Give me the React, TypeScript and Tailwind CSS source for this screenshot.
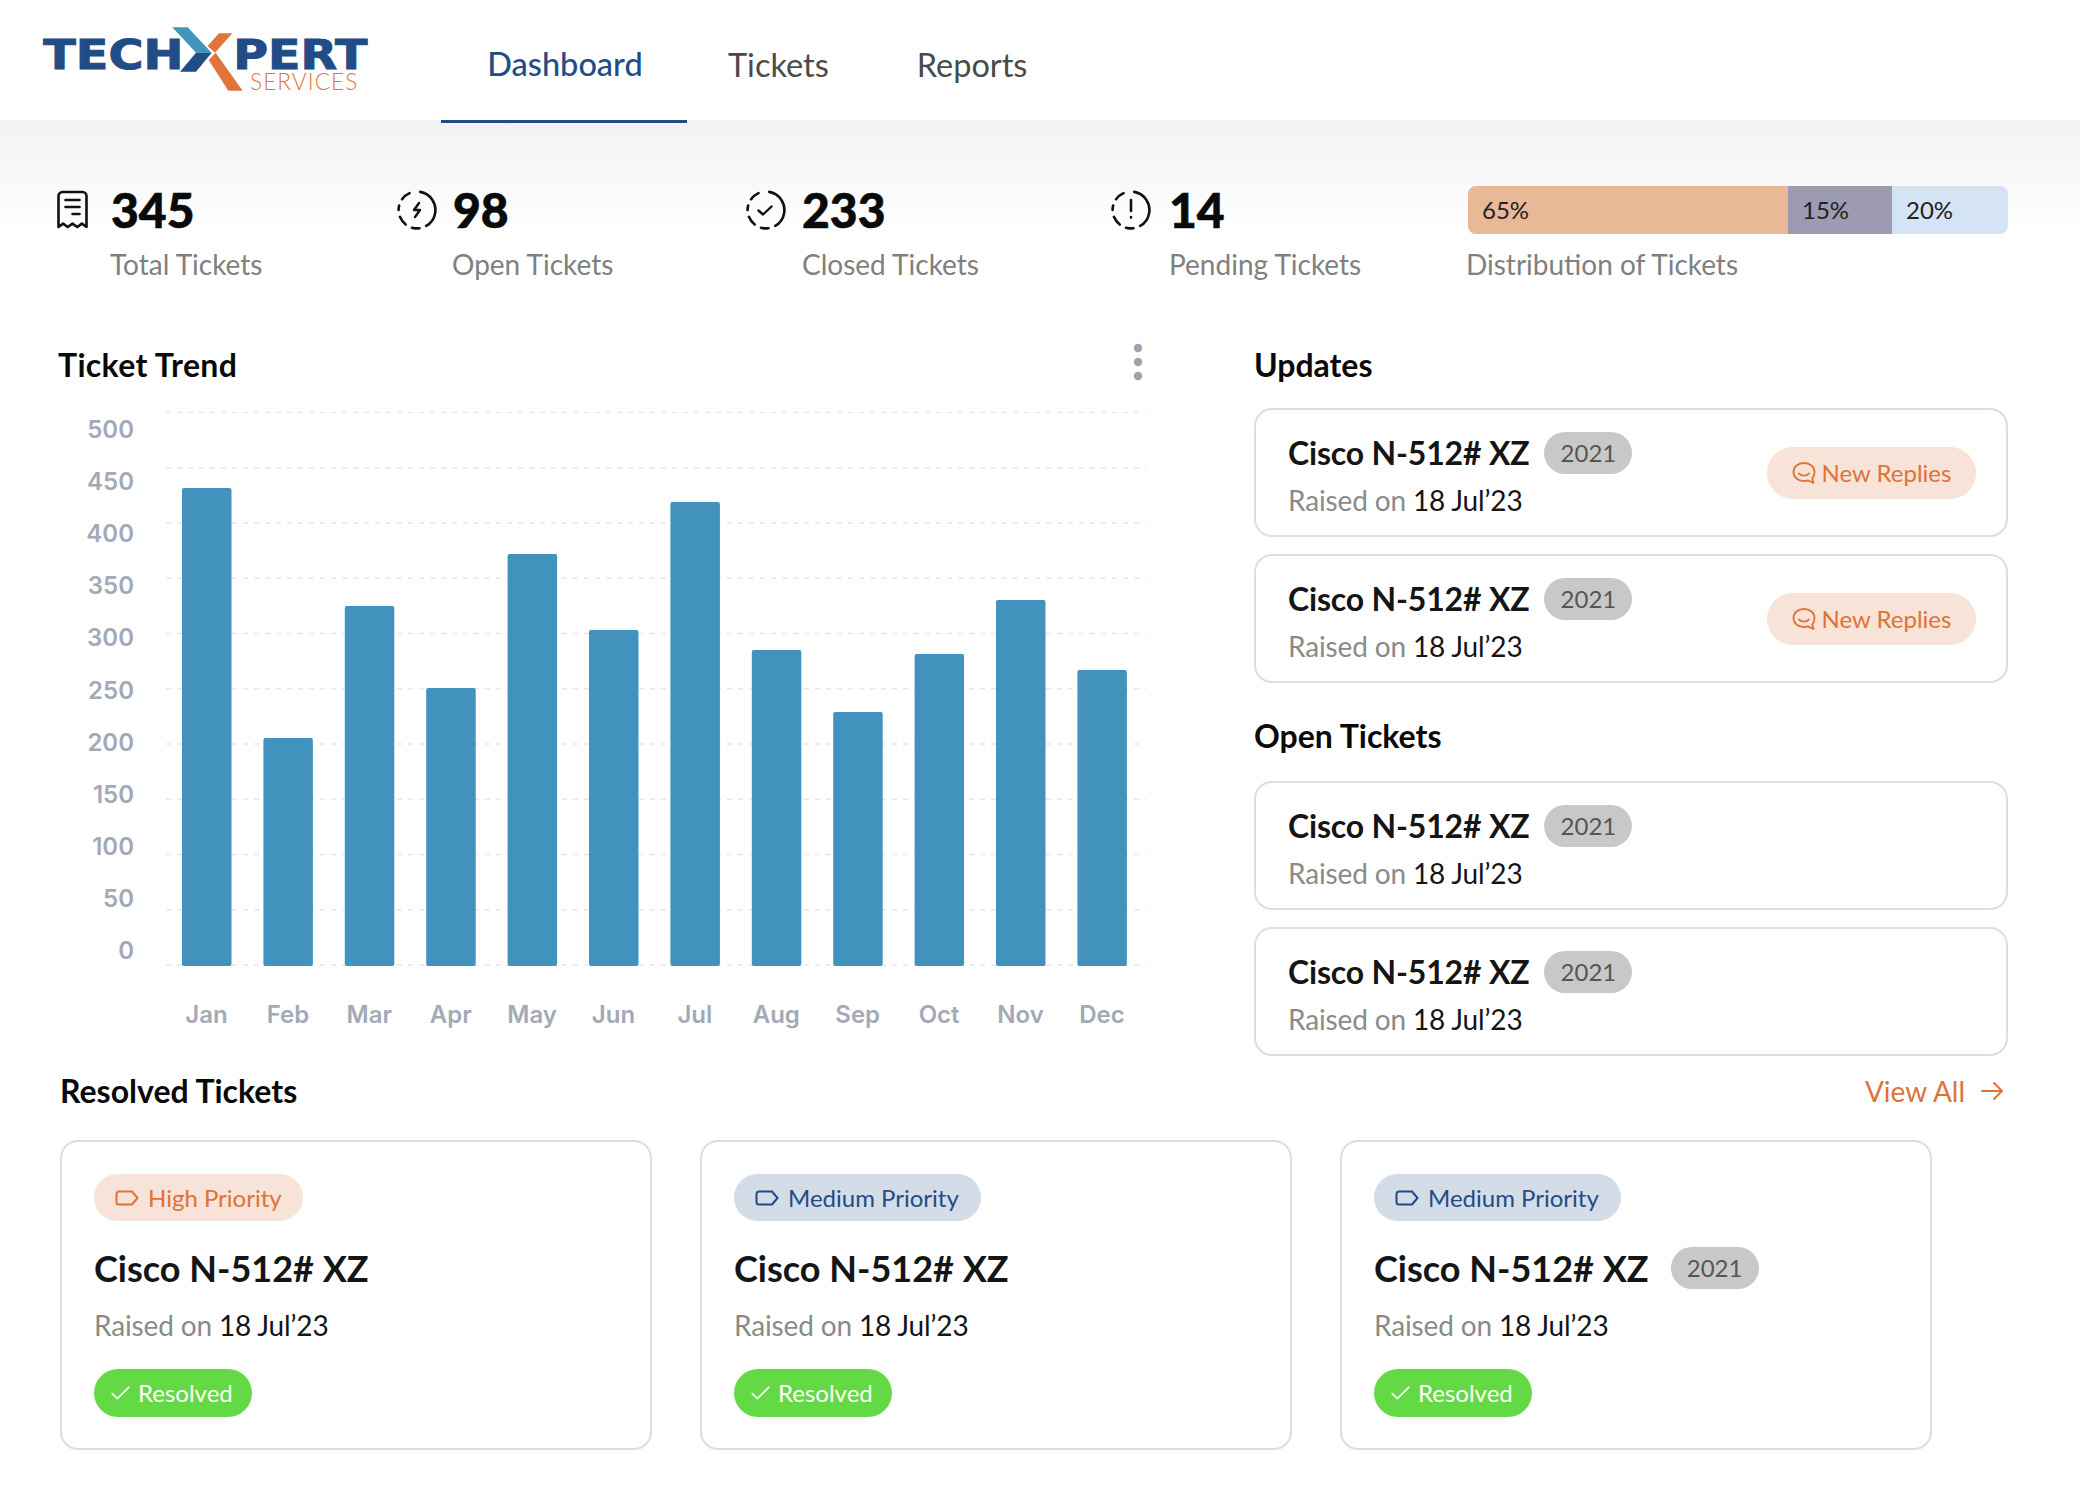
import { Check } from "lucide-react";

const months = ["Jan", "Feb", "Mar", "Apr", "May", "Jun", "Jul", "Aug", "Sep", "Oct", "Nov", "Dec"];
const barTops = [488, 738, 606, 688, 554, 630, 502, 650, 712, 654, 600, 670];
const yLabels = [500, 450, 400, 350, 300, 250, 200, 150, 100, 50, 0];

function Logo() {
  return (
    <svg width="360" height="100" viewBox="0 0 1080 300" className="shrink-0">
      <text x="70" y="178" fontFamily="DejaVu Sans" fontWeight="700" fontSize="122" fill="#214C86" stroke="#214C86" strokeWidth="3" textLength="420" lengthAdjust="spacingAndGlyphs">
        TECH
      </text>
      <text x="640" y="178" fontFamily="DejaVu Sans" fontWeight="700" fontSize="122" fill="#214C86" stroke="#214C86" strokeWidth="3" textLength="402" lengthAdjust="spacingAndGlyphs">
        PERT
      </text>
      <polygon points="457,52 503,52 575,128 528,128" fill="#4096BD" />
      <polygon points="480,185 528,185 575,128 528,128" fill="#214C86" />
      <polygon points="563,108 597,70 637,70 585,128" fill="#E1743A" />
      <polygon points="566,150 587,128 668,242 625,242" fill="#E1743A" />
      <text x="690" y="241" fontFamily="Lato" fontWeight="300" fontSize="68" fill="#E1743A" textLength="322" lengthAdjust="spacing">
        SERVICES
      </text>
    </svg>
  );
}

function DashedCircle({ children }: { children: React.ReactNode }) {
  return (
    <svg width="40" height="40" viewBox="0 0 40 40" fill="none" stroke="#111" strokeWidth="2.6" strokeLinecap="round" strokeLinejoin="round">
      <circle cx="20" cy="20" r="18.4" pathLength={360} strokeDasharray="140 22 24 22 30 22 14 22 30 54" transform="rotate(-80 20 20)" />
      {children}
    </svg>
  );
}

function ReceiptIcon() {
  return (
    <svg width="34" height="40" viewBox="0 0 34 40" fill="none" stroke="#111" strokeWidth="2.6" strokeLinecap="round" strokeLinejoin="round">
      <path d="M1.500 37V6a4 4 0 0 1 4-4h20a4 4 0 0 1 4 4v31l-4.600-3.400-4.600 3.400-4.800-3.400-4.800 3.400-4.600-3.400z" />
      <path d="M8.500 10h14M8.500 17h14M15.500 24h7" />
    </svg>
  );
}

function TagIcon({ color }: { color: string }) {
  return (
    <svg width="24" height="16" viewBox="0 0 24 16" fill="none" stroke={color} strokeWidth="2" strokeLinejoin="round">
      <path d="M4 1.500h13l5.500 6.500-5.500 6.500H4a2.500 2.500 0 0 1-2.500-2.500V4A2.500 2.500 0 0 1 4 1.500z" />
    </svg>
  );
}

function ReplyIcon() {
  return (
    <svg width="24" height="24" viewBox="0 0 24 24" fill="none" stroke="#E07236" strokeWidth="1.8" strokeLinecap="round" strokeLinejoin="round">
      <path d="M12 2C6 2 1.500 5.800 1.500 11S6 20 12 20c2 0 2.700-.2 3.800-.6L21.500 22l-1.200-4.600C22 15.800 22.500 13.500 22.500 11 22.500 5.800 18 2 12 2z" />
      <path d="M7 12.500c2.800 2.800 7.200 2.800 10 0" />
    </svg>
  );
}

function ArrowIcon() {
  return (
    <svg width="24" height="20" viewBox="0 0 24 20" fill="none" stroke="#E07236" strokeWidth="2" strokeLinecap="round" strokeLinejoin="round">
      <path d="M2 10h20M14 2l8 8-8 8" />
    </svg>
  );
}

function YearBadge() {
  return (
    <span className="flex h-[42px] w-[88px] items-center justify-center rounded-full bg-[#C8C8C8] text-[24px] text-[#555555]">2021</span>
  );
}

function RaisedOn() {
  return (
    <p className="text-[28px] leading-[40px] tracking-[-0.15px] text-[#8A8A8A]">
      Raised on <span className="text-[#151515]">18 Jul’23</span>
    </p>
  );
}

function TicketCard({ replies }: { replies?: boolean }) {
  return (
    <div className="flex h-[129px] items-center justify-between rounded-[18px] border-2 border-[#DEDEDE] bg-white pr-[30px] pl-[32px]">
      <div className="pt-[6px]">
        <div className="flex h-[42px] items-center gap-[15px]">
          <span className="text-[32px] font-bold tracking-[-0.18px] text-[#151515]">Cisco N-512# XZ</span>
          <YearBadge />
        </div>
        <div className="mt-[6px]">
          <RaisedOn />
        </div>
      </div>
      {replies && (
        <span className="flex h-[52px] w-[209px] items-center justify-center gap-[6px] rounded-full bg-[#F7E3D7] text-[24px] text-[#E07236]">
          <ReplyIcon />
          New Replies
        </span>
      )}
    </div>
  );
}

function ResolvedCard({ medium, badge }: { medium?: boolean; badge?: boolean }) {
  return (
    <div className="h-[310px] w-[592px] rounded-[18px] border-2 border-[#DEDEDE] bg-white pt-[32px] pl-[32px]">
      {medium ? (
        <span className="flex h-[47px] w-[247px] items-center gap-[9px] rounded-full bg-[#D3DCE7] pl-[21px] text-[24px] text-[#214C86]">
          <TagIcon color="#214C86" />
          Medium Priority
        </span>
      ) : (
        <span className="flex h-[47px] w-[209px] items-center gap-[9px] rounded-full bg-[#F7E3D7] pl-[21px] text-[24px] text-[#E07236]">
          <TagIcon color="#E07236" />
          High Priority
        </span>
      )}
      <div className="mt-[22px] flex h-[50px] items-center gap-[22px]">
        <span className="text-[36px] font-bold text-[#151515]">Cisco N-512# XZ</span>
        {badge && <YearBadge />}
      </div>
      <div className="mt-[12px]">
        <RaisedOn />
      </div>
      <span className="mt-[24px] flex h-[48px] w-[158px] items-center gap-[5px] rounded-full bg-[#63D945] pl-[14px] text-[24px] text-white">
        <Check size={25} strokeWidth={1.6} />
        Resolved
      </span>
    </div>
  );
}

function TrendChart() {
  return (
    <svg width="1100" height="640" viewBox="58 400 1100 640" className="mt-[15px] block">
      {yLabels.map((label, i) => (
        <g key={label}>
          <line x1="166" x2="1146" y1={412.5 + i * 55.25} y2={412.5 + i * 55.25} stroke="#E5E7EB" strokeWidth="1.5" strokeDasharray="5 6" />
          <text x="134" y={438 + i * 52.1} textAnchor="end" fontFamily="Inter" fontWeight="600" fontSize="24" fill="#A3A9B7">
            {label}
          </text>
        </g>
      ))}
      {months.map((month, i) => (
        <g key={month}>
          <rect x={182 + i * 81.4} y={barTops[i]} width="49.5" height={966 - barTops[i]} rx="2" fill="#4193BD" />
          <text x={206.500 + i * 81.4} y="1023" textAnchor="middle" fontFamily="Inter" fontWeight="600" fontSize="24" fill="#A3A9B7">
            {month}
          </text>
        </g>
      ))}
    </svg>
  );
}

const stats = [
  { value: "345", label: "Total Tickets", box: "w-[340px]", gap: "gap-[20px]", icon: <ReceiptIcon /> },
  {
    value: "98",
    label: "Open Tickets",
    box: "w-[349px]",
    gap: "gap-[16px]",
    icon: (
      <DashedCircle>
        <path d="M22 13l-5 7h6l-5 7" strokeWidth="2.4" />
      </DashedCircle>
    ),
  },
  {
    value: "233",
    label: "Closed Tickets",
    box: "w-[365px]",
    gap: "gap-[16px]",
    icon: (
      <DashedCircle>
        <path d="M12.500 20.500l4.500 4 8.500-8" strokeWidth="2.4" />
      </DashedCircle>
    ),
  },
  {
    value: "14",
    label: "Pending Tickets",
    box: "w-[357px]",
    gap: "gap-[18px]",
    icon: (
      <DashedCircle>
        <path d="M20 10v11M20 27v.5" strokeWidth="2.6" />
      </DashedCircle>
    ),
  },
];

export default function App() {
  return (
    <div className="h-[1500px] w-[2080px] overflow-hidden bg-white font-[Lato,sans-serif]">
      {/* Header */}
      <header className="relative z-10 flex h-[120px] items-start bg-white">
        <div className="ml-[20px] mt-[10px] w-[421px]">
          <Logo />
        </div>
        <nav className="flex text-[32.5px]">
          <a className="flex h-[123px] w-[246px] items-center justify-center border-b-[3px] border-[#214C86] pt-[9px] pl-[2px] font-medium text-[#214C86]">Dashboard</a>
          <a className="ml-[41px] flex h-[120px] items-center pt-[10px] text-[#4A4A4A]">Tickets</a>
          <a className="ml-[88px] flex h-[120px] items-center pt-[10px] text-[#4A4A4A]">Reports</a>
        </nav>
      </header>

      {/* Stats */}
      <section className="flex h-[164px] bg-gradient-to-b from-[#F2F2F2] to-white to-70% pt-[66px] pl-[57px]">
        {stats.map((stat) => (
          <div key={stat.label} className={stat.box}>
            <div className={`flex h-[48px] items-center ${stat.gap}`}>
              {stat.icon}
              <span className="text-[48px] font-black leading-[48px] text-[#0A0A0A] [-webkit-text-stroke:0.6px_#0A0A0A]">{stat.value}</span>
            </div>
          </div>
        ))}
        <div className="w-[540px]">
          <div className="flex h-[48px] w-[540px] overflow-hidden rounded-[8px] text-[24px] text-[#222222]">
            <div className="flex w-[320px] items-center bg-[#E9B896] pl-[14px]">65%</div>
            <div className="flex w-[104px] items-center bg-[#9C9BB2] pl-[14px]">15%</div>
            <div className="flex flex-1 items-center bg-[#D5E4F5] pl-[14px]">20%</div>
          </div>
        </div>
      </section>
      <div className="-mt-[38px] flex h-[36px] text-[28px] leading-[36px] text-[#808080]">
        <span className="ml-[110px] w-[342px]">Total Tickets</span>
        <span className="w-[350px]">Open Tickets</span>
        <span className="w-[367px]">Closed Tickets</span>
        <span className="w-[297px]">Pending Tickets</span>
        <span>Distribution of Tickets</span>
      </div>

      {/* Trend and side lists */}
      <section className="mt-[63px] flex pl-[58px]">
        <div className="w-[1196px]">
          <div className="flex h-[40px] w-[1085px] items-start justify-between">
            <h2 className="text-[32px] font-bold leading-[40px] tracking-[0.33px] text-[#0A0A0A]">Ticket Trend</h2>
            <svg width="10" height="38" viewBox="0 0 10 38" className="-mt-[2px]" fill="#9CA3AF">
              <circle cx="5" cy="5" r="4.200" />
              <circle cx="5" cy="19" r="4.200" />
              <circle cx="5" cy="33" r="4.200" />
            </svg>
          </div>
          <TrendChart />
        </div>
        <div className="w-[754px]">
          <h2 className="text-[32px] font-bold leading-[40px] text-[#0A0A0A]">Updates</h2>
          <div className="mt-[23px] flex flex-col gap-[17px]">
            <TicketCard replies />
            <TicketCard replies />
          </div>
          <h2 className="mt-[33px] text-[32px] font-bold leading-[40px] text-[#0A0A0A]">Open Tickets</h2>
          <div className="mt-[25px] flex flex-col gap-[17px]">
            <TicketCard />
            <TicketCard />
          </div>
        </div>
      </section>

      {/* Resolved */}
      <section className="mt-[15px] pl-[60px]">
        <div className="flex h-[40px] w-[1948px] items-center justify-between">
          <h2 className="text-[32px] font-bold leading-[40px] text-[#0A0A0A]">Resolved Tickets</h2>
          <a className="mr-[4px] flex items-center gap-[15px] text-[28px] text-[#E07236]">
            View All
            <ArrowIcon />
          </a>
        </div>
        <div className="mt-[29px] flex gap-[48px]">
          <ResolvedCard />
          <ResolvedCard medium />
          <ResolvedCard medium badge />
        </div>
      </section>
    </div>
  );
}
